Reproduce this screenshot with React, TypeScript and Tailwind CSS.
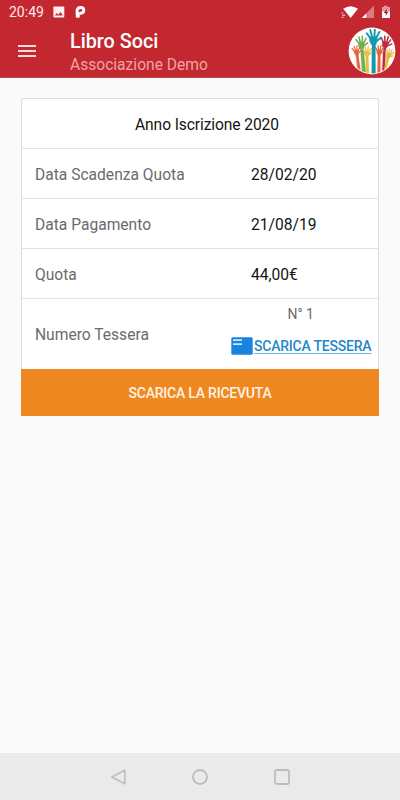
import React from "react";

type HandProps = { x: number; y: number; s: number; r?: number; color: string; arm: string };

// Raised hand: spread fingers over a palm, with its arm running to the logo's lower edge.
function Hand({ x, y, s, r = 0, color, arm }: HandProps) {
  return (
    <g fill={color} stroke={color} strokeLinecap="round" strokeLinejoin="round">
      <path d={arm} strokeWidth={0.2} />
      <g transform={`translate(${x} ${y}) rotate(${r}) scale(${s})`}>
        <path d="M-2.8 -1 L2.8 -1 L2.6 2.6 L1.3 5.4 L-1.3 5.4 L-2.8 2.6 Z" strokeWidth={0.6} />
        <path d="M-2.2 0 L-5 -4.2 M-0.9 -1 L-2 -6.6 M0.9 -1 L1.6 -6.8 M2.2 0 L5 -4.6 M2 2.6 L6.2 0" strokeWidth={1.5} fill="none" />
      </g>
    </g>
  );
}

function Logo() {
  return (
    <svg viewBox="0 0 48 48" className="size-12 shrink-0">
      <defs>
        <clipPath id="disc"><circle cx="24" cy="24" r="22.4" /></clipPath>
      </defs>
      <circle cx="24" cy="24" r="23.4" fill="#fffefc" />
      <g clipPath="url(#disc)">
        <Hand x={13.4} y={16.4} s={1.02} r={-5} color="#6db052" arm="M12.4 19 L15.3 19 L17.8 45 L14 45 Z" />
        <Hand x={37.6} y={16} s={1} r={10} color="#bd2940" arm="M35.6 18 L38 18 L36.5 46 L34 46 Z" />
        <Hand x={8.4} y={24.2} s={0.78} r={-8} color="#e2653d" arm="M7.5 25 L10 25 L12.6 44 L9.5 42 Z" />
        <Hand x={41.2} y={27.2} s={0.76} r={20} color="#e9b63e" arm="M38.8 29 L41.4 30 L38.5 42 L35.8 44 Z" />
        <Hand x={19} y={25.4} s={0.82} color="#e9bd3f" arm="M17.9 27 L20.2 27 L21.2 48 L17.9 48 Z" />
        <Hand x={31.3} y={24} s={0.82} r={3} color="#e2653d" arm="M30 26 L32.4 26 L32.4 48 L29.2 48 Z" />
        <Hand x={25.4} y={11.2} s={1.28} r={-4} color="#1699ad" arm="M24.1 14 L27.4 14 L27.6 48 L23.6 48 Z" />
      </g>
    </svg>
  );
}

function StatusBar() {
  return (
    <div className="flex h-6 items-center pl-[9px] pr-[9px] text-white">
      <span className="w-[44px] text-[14px] leading-6 text-[#ffe9ea]">20:49</span>
      <svg viewBox="0 0 12 12" className="h-3 w-3">
        <path fill="#fff0f0" fillRule="evenodd" d="M1.2 .5h9.3q.8 0 .8.8v9.3q0 .8-.8.8H1.2q-.8 0-.8-.8V1.300q0-.8.8-.8ZM1.800 9.600h8.200L7.400 6.100 5.300 8.700 3.800 6.900Z" />
      </svg>
      <svg viewBox="0 0 12 14" className="ml-[10px] h-[14px] w-3">
        <path d="M2.100 8.500V5.200Q2.600 2.500 5.700 2.500T8.800 5.300 5.800 8.200H4.800" fill="none" stroke="#fff" strokeWidth="2.900" />
        <path d="M.8 7H4.800V11.800Q4.800 12.800 3.800 12.800H1.800Q.8 12.800 .8 11.800Z" fill="#fff" />
      </svg>
      <svg viewBox="0 0 18 14" className="ml-auto h-[14px] w-[18px]">
        <path d="M2.200 3.800Q9.500 -1.200 17 3.800L9.600 13Z" fill="#fff" />
        <path d="M.5 8H2.300M1 10.300H4.300M.5 12.300H2.500" stroke="#ffd5d7" strokeWidth="1.100" />
      </svg>
      <svg viewBox="0 0 14 14" className="ml-[2px] h-[14px] w-[14px]">
        <path d="M13 .5V13H.8Z" fill="#dc7a80" />
        <path d="M5.200 8.500V13H.8Z" fill="#fff" />
      </svg>
      <svg viewBox="0 0 10 14" className="ml-[6px] h-[14px] w-[10px]">
        <path d="M3 .8H6.500V2H9V7H1V2H3Z" fill="#e39a9e" />
        <path d="M1 6.500H9V13H1Z" fill="#fff" />
        <path d="M5.800 3.500 2.800 8H4.700V11L7.300 6.800H5.400Z" fill="#a6131f" />
      </svg>
    </div>
  );
}

const rows = [
  ["Data Scadenza Quota", "28/02/20"],
  ["Data Pagamento", "21/08/19"],
  ["Quota", "44,00€"],
];

export default function App() {
  return (
    <div className="flex h-[800px] w-[400px] flex-col overflow-hidden bg-[#fafafa] font-['Roboto',sans-serif] whitespace-nowrap">
      <header className="h-[78px] shrink-0 border-b border-[#b84a50] bg-[#c3272f]">
        <StatusBar />
        <div className="flex h-[53px] items-center pl-[18px] pr-[4px]">
          <div className="flex w-[52px] flex-col gap-[3px]">
            <span className="h-[2px] w-[18px] bg-[#ffdadb]" />
            <span className="h-[2px] w-[18px] bg-[#ffdadb]" />
            <span className="h-[2px] w-[18px] bg-[#ffdadb]" />
          </div>
          <div className="flex-1 pt-[3px]">
            <h1 className="text-[19.800px] leading-[25px] font-medium text-white">Libro Soci</h1>
            <p className="text-[15.600px] leading-[22px] text-[#eda5a8]">Associazione Demo</p>
          </div>
          <Logo />
        </div>
      </header>

      <main className="flex-1 px-[21px] pt-5">
        <section className="rounded-t-[3px] border border-b-0 border-[#dedede] bg-white text-[15.600px] text-[#141414]">
          <div className="flex h-[50px] items-center justify-center border-b border-[#e2e2e2] pt-[4px] pl-[14px] tracking-[-0.1px]">Anno Iscrizione 2020</div>
          {rows.map(([label, value]) => (
            <div key={label} className="flex h-[50px] items-center border-b border-[#e2e2e2] pt-[4px] pl-[13px]">
              <span className="w-[216px] text-[#6b6b6b]">{label}</span>
              <span>{value}</span>
            </div>
          ))}
          <div className="flex h-[70px] items-center pl-[13px]">
            <span className="w-[196px] pt-[4px] text-[#6b6b6b]">Numero Tessera</span>
            <div className="flex h-full flex-col pt-[4px]">
              <span className="pr-[1px] text-center text-[14px] leading-[22px] tracking-[-0.100px] text-[#6b6b6b]">N° 1</span>
              <div className="mt-[10px] flex items-center">
                <svg viewBox="0 0 22 18" className="h-[18px] w-[22px]">
                  <rect x=".3" y=".3" width="21.400" height="17.400" rx="1.500" fill="#1984df" />
                  <path d="M2 3.200H11M2 7.200H11" stroke="#c9e8ff" strokeWidth="1.800" />
                </svg>
                <a href="#" className="ml-[1px] text-[14px] leading-[22px] font-medium tracking-[-0.220px] text-[#2487ca] underline decoration-[#69b7e6] decoration-1 underline-offset-2">SCARICA TESSERA</a>
              </div>
            </div>
          </div>
        </section>
        <button className="flex h-[47px] w-full items-center justify-center bg-[#f08821] pt-[1px] text-[14px] font-medium tracking-[-0.220px] text-[#fff4e3]">SCARICA LA RICEVUTA</button>
      </main>

      <nav className="flex h-[47px] shrink-0 items-center justify-center gap-[64px] bg-[#eaeaea]">
        <svg viewBox="0 0 18 18" className="size-[18px]" fill="none" stroke="#bdbdbd" strokeWidth="1.700" strokeLinejoin="round"><path d="M15.800 2.200V15.800L2.800 9Z" /></svg>
        <svg viewBox="0 0 18 18" className="size-[18px]" fill="none" stroke="#bdbdbd" strokeWidth="1.800"><circle cx="9" cy="9" r="7" /></svg>
        <svg viewBox="0 0 18 18" className="size-[18px]" fill="none" stroke="#bdbdbd" strokeWidth="1.800"><rect x="2" y="2" width="14" height="14" rx="1.800" /></svg>
      </nav>
    </div>
  );
}
